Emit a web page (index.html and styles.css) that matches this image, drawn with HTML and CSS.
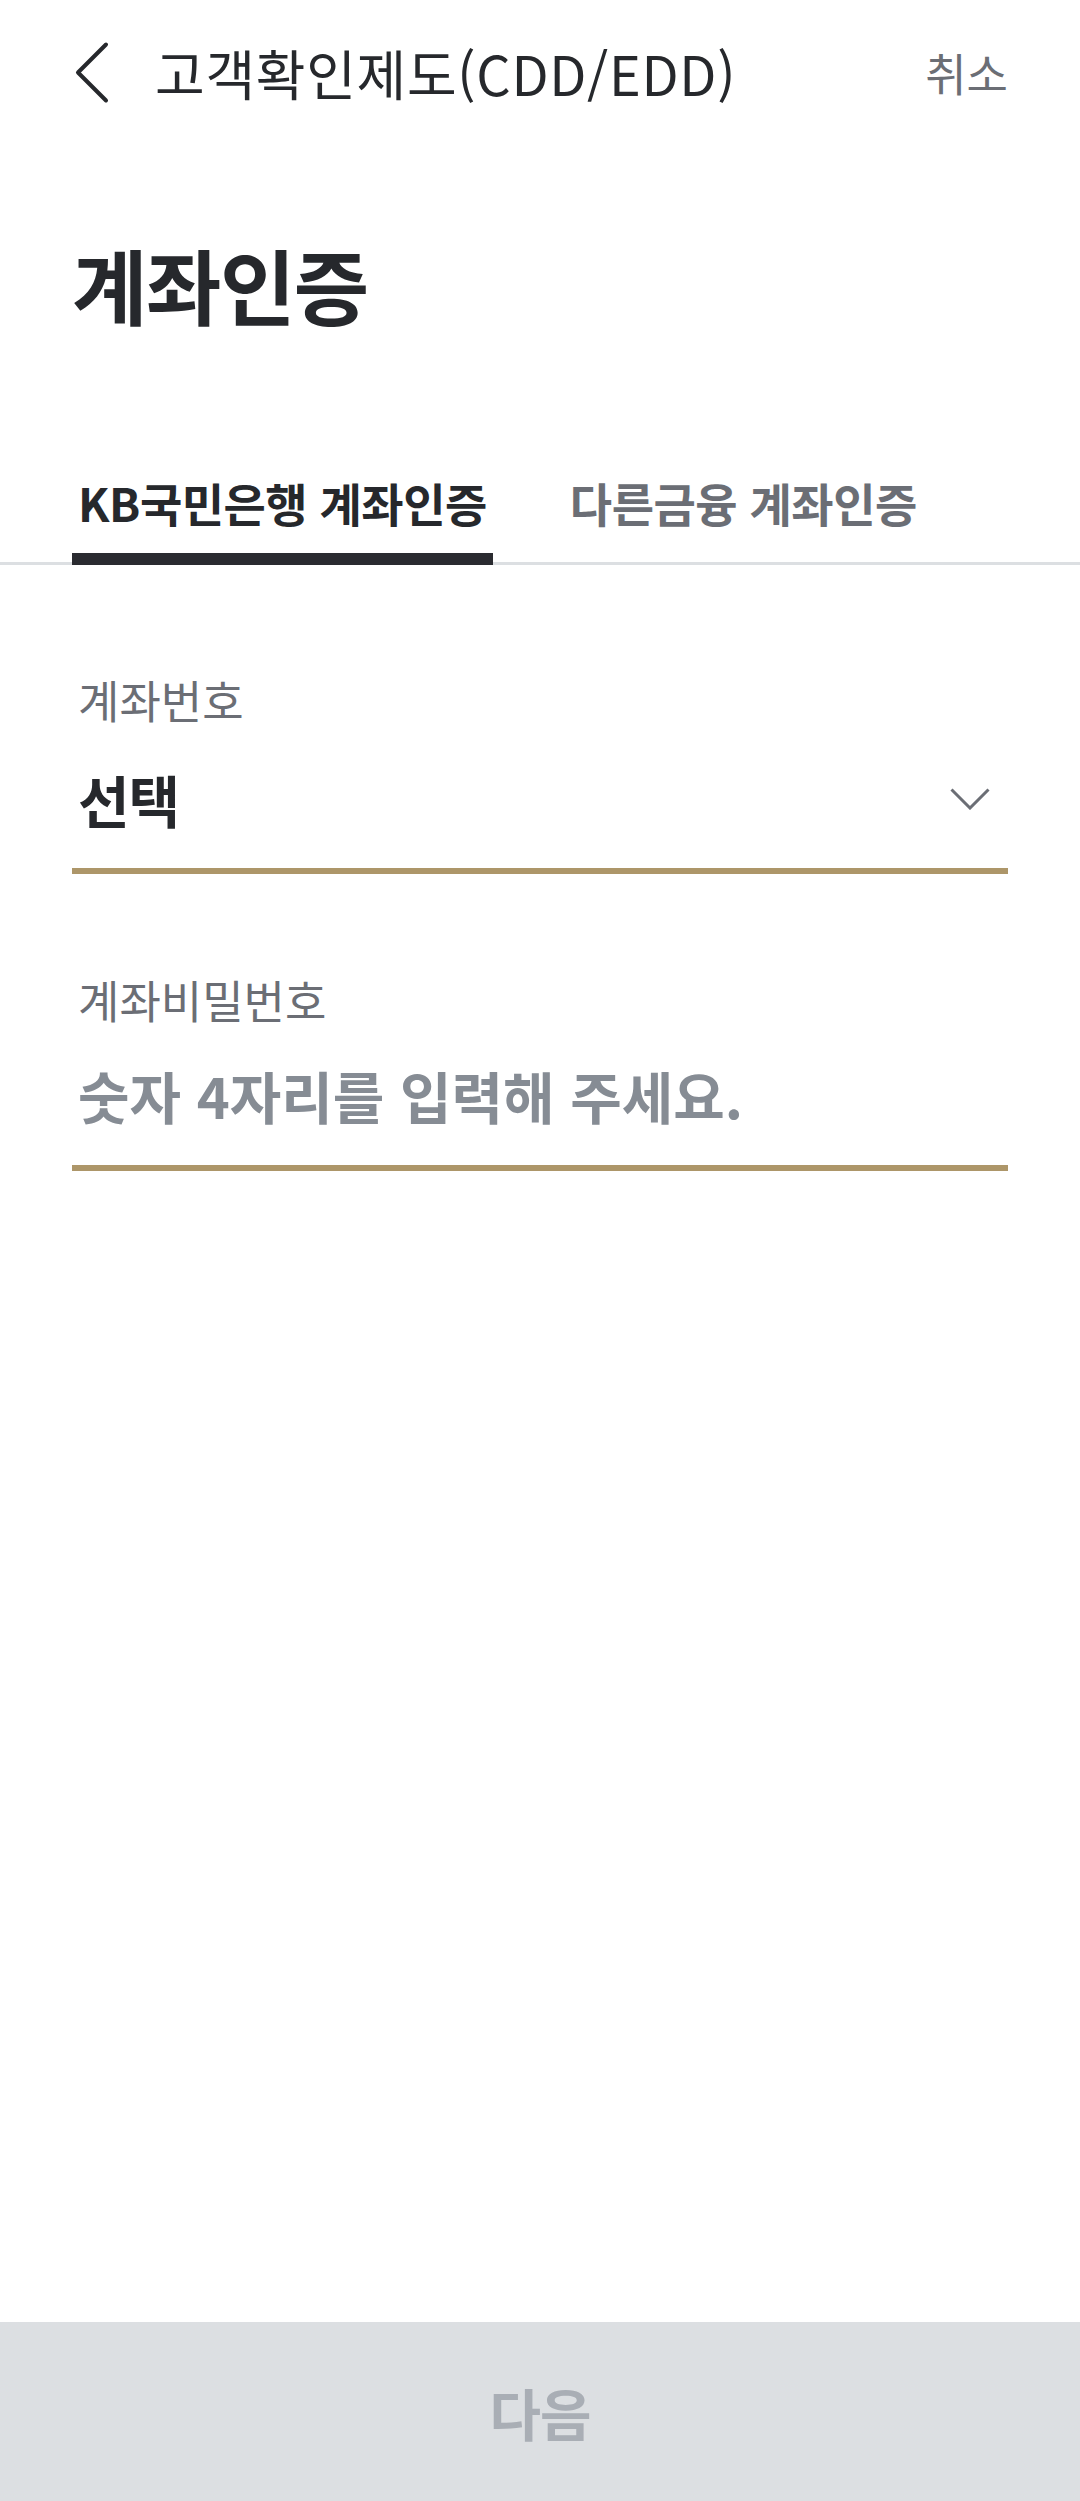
FILE: index.html
```html
<!DOCTYPE html>
<html lang="ko">
<head>
<meta charset="utf-8">
<title>계좌인증</title>
<link rel="stylesheet" href="styles.css">
</head>
<body>
<div class="page">
  <header class="topbar">
    <svg class="back" width="40" height="64" viewBox="0 0 40 64" aria-hidden="true">
      <polyline points="34,3.5 6,31.5 34,59.5" fill="none" stroke="#26282c" stroke-width="4" stroke-linecap="round" stroke-linejoin="round"/>
    </svg>
    <div class="title">고객확인제도(CDD/EDD)</div>
    <div class="cancel">취소</div>
  </header>

  <h1 class="heading">계좌인증</h1>

  <nav class="tabs">
    <div class="tab active">KB국민은행 계좌인증</div>
    <div class="tab">다른금융 계좌인증</div>
  </nav>

  <section class="field field-first">
    <div class="label">계좌번호</div>
    <div class="row">
      <div class="value">선택</div>
      <svg class="chev" width="40" height="22" viewBox="0 0 40 22" aria-hidden="true">
        <polyline points="1.5,1.5 20,20 38.5,1.5" fill="none" stroke="#6b6e75" stroke-width="3"/>
      </svg>
    </div>
  </section>

  <section class="field field-second">
    <div class="label">계좌비밀번호</div>
    <div class="row">
      <div class="placeholder">숫자 4자리를 입력해 주세요.</div>
    </div>
  </section>

  <div class="spacer"></div>

  <div class="next">다음</div>
</div>
</body>
</html>
```

FILE: styles.css
```css
* { box-sizing: border-box; }
html, body {
  margin: 0;
  padding: 0;
  background: #ffffff;
}
body {
  font-family: "Noto Sans CJK KR", "Noto Sans", sans-serif;
  color: #26282c;
}
.page {
  width: 1080px;
  min-height: 2501px;
  display: flex;
  flex-direction: column;
}
.topbar {
  height: 145px;
  display: flex;
  align-items: center;
  padding: 0 72px;
}
.back {
  flex: none;
  display: block;
}
.title {
  margin-left: 43px;
  font-size: 54px;
  line-height: 54px;
  font-weight: 400;
  color: #26282c;
  letter-spacing: 0.7px;
  flex: 1;
}
.cancel {
  font-size: 45px;
  line-height: 45px;
  color: #6b6e75;
  font-weight: 400;
}
.heading {
  margin: 98px 0 0 72px;
  font-size: 82px;
  line-height: 82px;
  font-weight: 700;
  letter-spacing: -1.5px;
  color: #26282c;
}
.tabs {
  margin-top: 154px;
  padding-left: 72px;
  display: flex;
  gap: 71px;
  border-bottom: 3px solid #dcdfe2;
}
.tab {
  padding: 0 6px 28px;
  font-size: 46px;
  line-height: 46px;
  font-weight: 700;
  letter-spacing: -0.5px;
  color: #6b6e75;
  border-bottom: 12px solid transparent;
  margin-bottom: -3px;
}
.tab.active {
  color: #26282c;
  border-bottom-color: #2a2b30;
}
.field {
  margin: 0 72px;
  border-bottom: 6px solid #ad9669;
}
.field-first {
  margin-top: 112px;
  padding-bottom: 41px;
}
.field-second {
  margin-top: 103px;
  padding-bottom: 42px;
}
.label {
  font-size: 45px;
  line-height: 45px;
  font-weight: 400;
  color: #6b6e75;
  padding-left: 6px;
}
.field-first .row { margin-top: 49px; }
.field-second .row { margin-top: 45px; }
.row {
  display: flex;
  align-items: center;
  justify-content: space-between;
  padding-left: 6px;
  padding-right: 18px;
}
.value {
  font-size: 56px;
  line-height: 56px;
  font-weight: 700;
  color: #26282c;
  letter-spacing: -1px;
}
.placeholder {
  font-size: 56px;
  line-height: 56px;
  font-weight: 700;
  color: #868c94;
  letter-spacing: 0;
}
.chev { display: block; }
.spacer { flex: 1; }
.next {
  height: 179px;
  background: #dcdfe2;
  display: flex;
  align-items: center;
  justify-content: center;
  font-size: 56px;
  font-weight: 700;
  color: #a9aeb5;
  letter-spacing: -1px;
}
```
